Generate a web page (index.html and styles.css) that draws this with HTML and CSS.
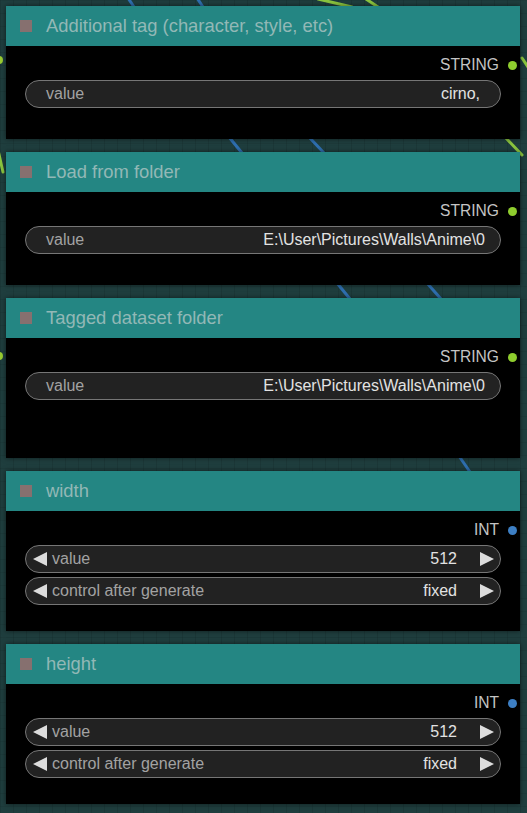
FILE: index.html
```html
<!DOCTYPE html>
<html>
<head>
<meta charset="utf-8">
<link rel="stylesheet" href="styles.css">
</head>
<body>
<div class="canvas">
  <svg class="wires" width="527" height="813" viewBox="0 0 527 813">
    <g stroke="#2f6fb0" stroke-width="3" stroke-linecap="round">
      <line x1="128" y1="-2" x2="134" y2="7"/>
      <line x1="197" y1="-2" x2="203" y2="7"/>
      <line x1="229" y1="137" x2="242" y2="153"/>
      <line x1="309" y1="137" x2="324" y2="153"/>
      <line x1="337" y1="283" x2="350" y2="299"/>
      <line x1="427" y1="283" x2="441" y2="299"/>
      <line x1="459" y1="456" x2="470" y2="472"/>
    </g>
    <g stroke="#8cc63f" stroke-width="3" stroke-linecap="round">
      <line x1="318" y1="-1" x2="352" y2="7"/>
      <line x1="366" y1="-1" x2="378" y2="7"/>
      <line x1="505" y1="137" x2="522" y2="155"/>
      <line x1="522" y1="58" x2="530" y2="70"/>
      <line x1="-2" y1="150" x2="3" y2="172"/>
    </g>
    <g fill="#9acd32">
      <circle cx="-1" cy="60" r="4"/>
      <circle cx="-1" cy="356" r="4"/>
    </g>
  </svg>

  <div class="graph">
    <section class="node node-short">
      <header class="node-title"><span class="node-box"></span><span class="node-name">Additional tag (character, style, etc)</span></header>
      <div class="node-body">
        <div class="slot"><span class="slot-label">STRING</span><span class="slot-dot dot-string"></span></div>
        <div class="widgets">
          <div class="widget text-widget"><span class="w-label">value</span><span class="w-value">cirno,</span></div>
        </div>
      </div>
    </section>

    <section class="node node-short">
      <header class="node-title"><span class="node-box"></span><span class="node-name">Load from folder</span></header>
      <div class="node-body">
        <div class="slot"><span class="slot-label">STRING</span><span class="slot-dot dot-string"></span></div>
        <div class="widgets">
          <div class="widget text-widget path-widget"><span class="w-label">value</span><span class="w-value">E:\User\Pictures\Walls\Anime\0</span></div>
        </div>
      </div>
    </section>

    <section class="node node-tall">
      <header class="node-title"><span class="node-box"></span><span class="node-name">Tagged dataset folder</span></header>
      <div class="node-body">
        <div class="slot"><span class="slot-label">STRING</span><span class="slot-dot dot-string"></span></div>
        <div class="widgets">
          <div class="widget text-widget path-widget"><span class="w-label">value</span><span class="w-value">E:\User\Pictures\Walls\Anime\0</span></div>
        </div>
      </div>
    </section>

    <section class="node node-tall">
      <header class="node-title"><span class="node-box"></span><span class="node-name">width</span></header>
      <div class="node-body">
        <div class="slot"><span class="slot-label">INT</span><span class="slot-dot dot-int"></span></div>
        <div class="widgets">
          <div class="widget num-widget">
            <svg class="arrow" width="14" height="14" viewBox="0 0 14 14"><polygon points="14,0 14,14 0,7"/></svg>
            <span class="w-label">value</span><span class="w-value">512</span>
            <svg class="arrow" width="14" height="14" viewBox="0 0 14 14"><polygon points="0,0 0,14 14,7"/></svg>
          </div>
          <div class="widget num-widget">
            <svg class="arrow" width="14" height="14" viewBox="0 0 14 14"><polygon points="14,0 14,14 0,7"/></svg>
            <span class="w-label">control after generate</span><span class="w-value">fixed</span>
            <svg class="arrow" width="14" height="14" viewBox="0 0 14 14"><polygon points="0,0 0,14 14,7"/></svg>
          </div>
        </div>
      </div>
    </section>

    <section class="node node-tall">
      <header class="node-title"><span class="node-box"></span><span class="node-name">height</span></header>
      <div class="node-body">
        <div class="slot"><span class="slot-label">INT</span><span class="slot-dot dot-int"></span></div>
        <div class="widgets">
          <div class="widget num-widget">
            <svg class="arrow" width="14" height="14" viewBox="0 0 14 14"><polygon points="14,0 14,14 0,7"/></svg>
            <span class="w-label">value</span><span class="w-value">512</span>
            <svg class="arrow" width="14" height="14" viewBox="0 0 14 14"><polygon points="0,0 0,14 14,7"/></svg>
          </div>
          <div class="widget num-widget">
            <svg class="arrow" width="14" height="14" viewBox="0 0 14 14"><polygon points="14,0 14,14 0,7"/></svg>
            <span class="w-label">control after generate</span><span class="w-value">fixed</span>
            <svg class="arrow" width="14" height="14" viewBox="0 0 14 14"><polygon points="0,0 0,14 14,7"/></svg>
          </div>
        </div>
      </div>
    </section>
  </div>
</div>
</body>
</html>
```

FILE: styles.css
```css
html, body {
  margin: 0;
  padding: 0;
}

body {
  width: 527px;
  height: 813px;
  overflow: hidden;
  background-color: #1f3e3e;
  background-image:
    linear-gradient(to right, rgba(0, 0, 0, 0.09) 1px, transparent 1px),
    linear-gradient(to bottom, rgba(0, 0, 0, 0.06) 1px, transparent 1px);
  background-size: 13px 13px;
  font-family: "Liberation Sans", Arial, sans-serif;
}

.canvas {
  position: relative;
  width: 527px;
  height: 813px;
}

.wires {
  position: absolute;
  left: 0;
  top: 0;
  overflow: visible;
}

.graph {
  position: relative;
  display: flex;
  flex-direction: column;
  gap: 13px;
  padding: 6px 7px 0 6px;
}

.node {
  width: 514px;
  background: #000;
  box-shadow: 0 0 5px rgba(0, 0, 0, 0.55);
}

.node-title {
  height: 40px;
  background: #248683;
  display: flex;
  align-items: center;
  padding-left: 14px;
  box-sizing: border-box;
}

.node-box {
  width: 12px;
  height: 12px;
  background: #86706f;
  flex: none;
}

.node-name {
  margin-left: 14px;
  color: #92b8b6;
  font-size: 18.4px;
  white-space: nowrap;
  margin-top: -1px;
}

.node-body {
  padding-top: 9px;
  box-sizing: border-box;
}

.node-short .node-body {
  height: 93px;
}

.node-tall .node-body {
  height: 120px;
}

.slot {
  height: 20px;
  display: flex;
  align-items: center;
  justify-content: flex-end;
  padding-right: 3px;
}

.slot-label {
  color: #c4c4c4;
  font-size: 15.6px;
  margin-right: 9px;
}

.slot-dot {
  width: 9px;
  height: 9px;
  border-radius: 50%;
}

.dot-string {
  background: #8fcd2e;
}

.dot-int {
  background: #3d7fc4;
}

.widgets {
  margin-top: 5px;
  padding: 0 19px;
  display: flex;
  flex-direction: column;
  gap: 4px;
}

.widget {
  height: 28px;
  box-sizing: border-box;
  border: 1px solid #767676;
  border-radius: 14px;
  background: #222;
  display: flex;
  align-items: center;
  font-size: 16px;
}

.text-widget {
  padding: 0 20px 0 20px;
}

.path-widget {
  padding-right: 15px;
}

.num-widget {
  padding: 0 6px 0 7px;
}

.w-label {
  color: #a2a2a2;
  flex: 1;
  white-space: nowrap;
}

.w-value {
  color: #e2e2e2;
  white-space: nowrap;
}

.num-widget .w-label {
  margin-left: 5px;
}

.num-widget .w-value {
  margin-right: 23px;
}

.arrow {
  flex: none;
  fill: #dcdcdc;
}
```
